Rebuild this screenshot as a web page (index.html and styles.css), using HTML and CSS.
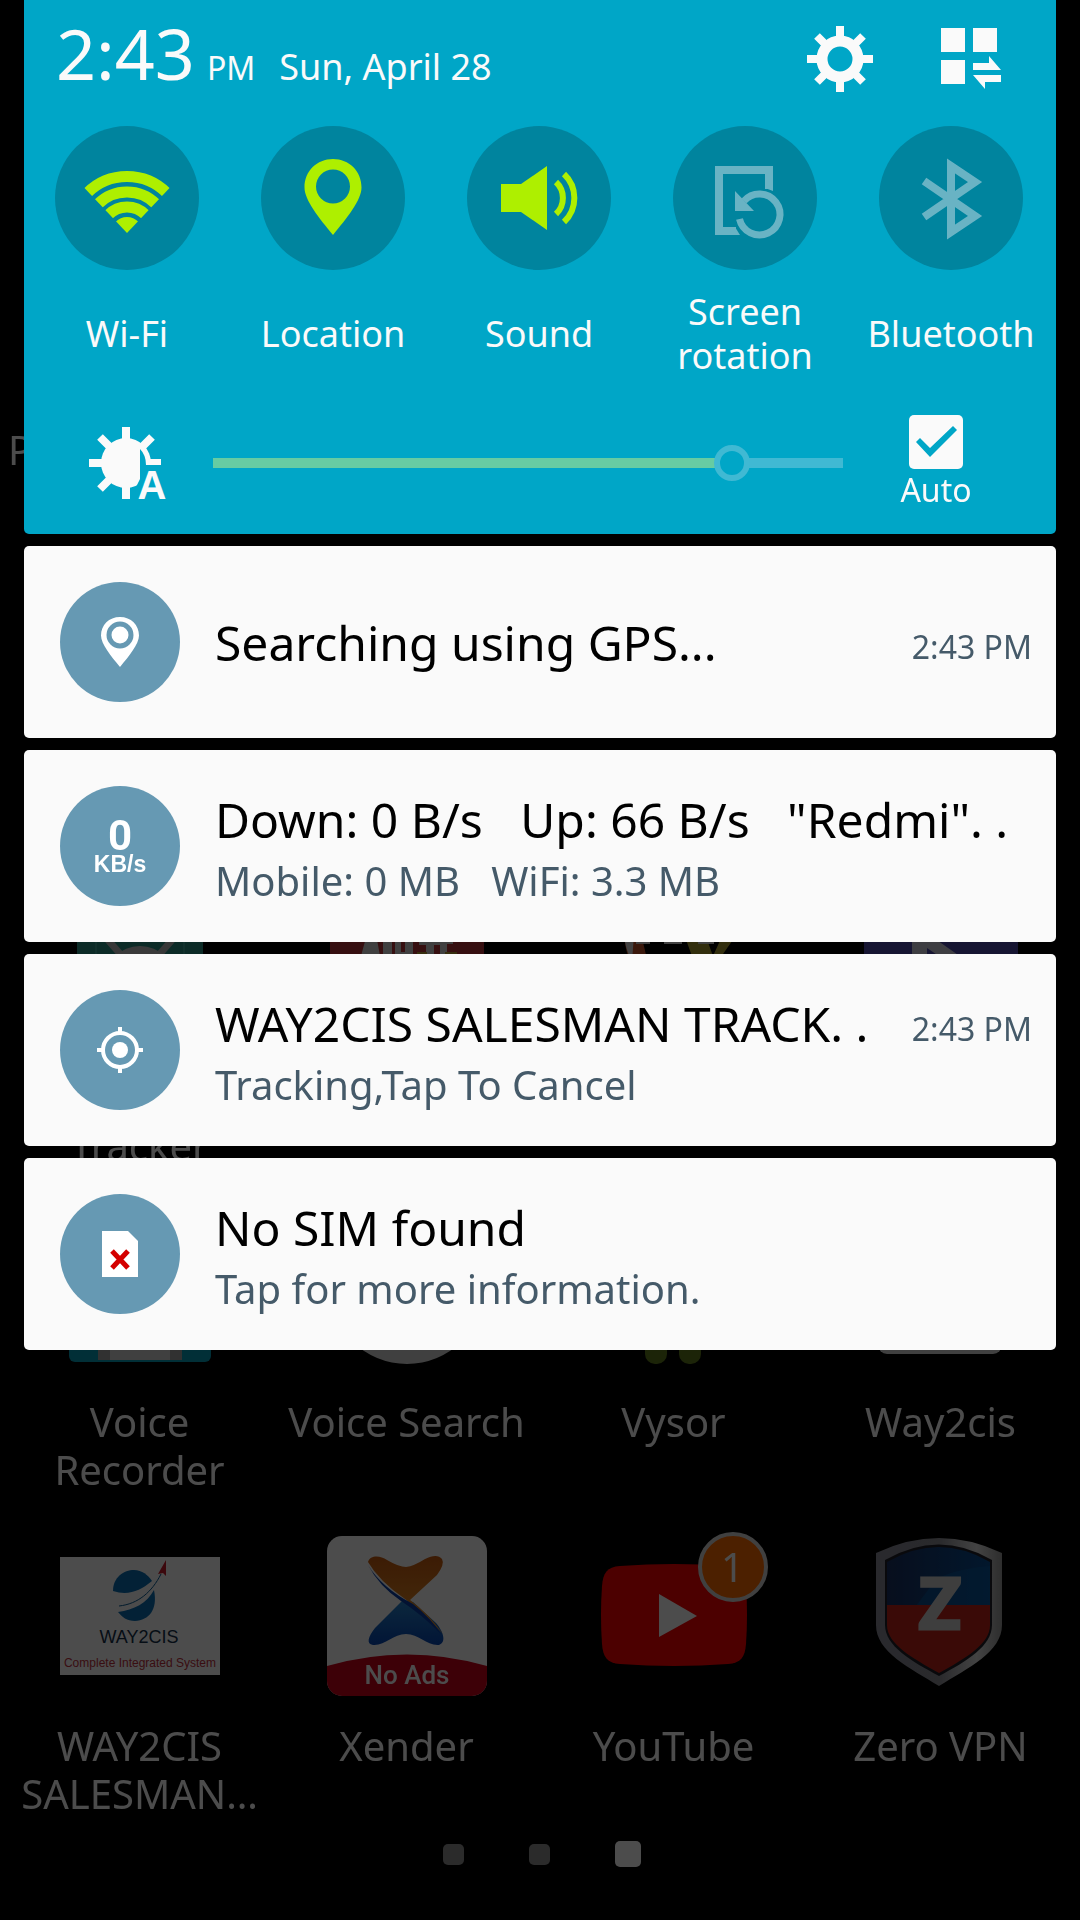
FILE: index.html
```html
<!DOCTYPE html>
<html lang="en">
<head>
<meta charset="utf-8">
<meta name="viewport" content="width=device-width, initial-scale=1">
<title>Notifications</title>
<link rel="stylesheet" href="styles.css">
</head>
<body>
<div class="screen">
  <main class="home">
    <div class="apps">
      <a class="app app-first" href="#"><span class="app-icon"></span><span class="app-label">P</span></a>

      <a class="app row-3" href="#">
        <svg class="app-icon" viewBox="0 0 160 160"><rect x="17" y="10" width="126" height="140" fill="#2b8f83"/><path d="M36 10v140M124 10v140" stroke="#3fa598" stroke-width="2"/><path d="M48 52l14 16M112 52l-14 16" stroke="#bbb" stroke-width="7"/><circle cx="80" cy="94" r="36" fill="#c4c4c4"/></svg>
        <span class="app-label"><br>Tracker</span>
      </a>
      <a class="app row-3" href="#">
        <svg class="app-icon" viewBox="0 0 160 160"><rect x="3" y="4" width="154" height="152" fill="#b53236"/><path d="M34 68l6-22h9l4 22zM56 46h9v20h-9zM68 46h6v18h4V46h8v20H68zM92 46h34v10h-6v10h-7v-9h-6v9h-8v-9h-7z" fill="#d8d8d8"/><path d="M90 64h10v4H90zM118 64h12v4h-12z" fill="#b59a30"/></svg>
      </a>
      <a class="app row-3" href="#">
        <svg class="app-icon" viewBox="0 0 160 160"><path d="M30 46c2 26 10 40 30 54L47 46z" fill="#c4532a"/><path d="M30 46c1 12 4 20 8 28l2-28z" fill="#ddd"/><path d="M90 46l18 50 35-50h-14l-10 22-8-22z" fill="#a89a2c"/><path d="M42 54h14M70 54h18M104 54h16" stroke="#ddd" stroke-width="4"/></svg>
      </a>
      <a class="app row-3" href="#">
        <svg class="app-icon" viewBox="0 0 160 160"><rect x="3" y="4" width="154" height="152" rx="40" fill="#4a46a8"/><path d="M51 48l9-7 80 56H51z" fill="#cfcfdc"/><path d="M66 60l44 30H66z" fill="#4a46a8"/></svg>
      </a>

      <a class="app row-4" href="#">
        <svg class="app-icon" viewBox="0 0 160 160"><rect x="9" y="8" width="142" height="142" rx="6" fill="#049dba"/><path d="M38 8h84v140H38z" fill="#a6a6a6"/><path d="M50 8h60v140H50z" fill="#d6d6d6"/></svg>
        <span class="app-label">Voice Recorder</span>
      </a>
      <a class="app row-4" href="#">
        <svg class="app-icon" viewBox="0 0 160 160"><circle cx="80" cy="74" r="78" fill="#d6d6d6"/></svg>
        <span class="app-label">Voice Search</span>
      </a>
      <a class="app row-4" href="#">
        <svg class="app-icon" viewBox="0 0 160 160"><rect x="51" y="100" width="22" height="52" rx="10" fill="#5f7a1c"/><rect x="85" y="100" width="22" height="52" rx="10" fill="#5f7a1c"/></svg>
        <span class="app-label">Vysor</span>
      </a>
      <a class="app row-4" href="#">
        <svg class="app-icon" viewBox="0 0 160 160"><rect x="17" y="20" width="124" height="122" rx="9" fill="#d6d6d6"/></svg>
        <span class="app-label">Way2cis</span>
      </a>

      <a class="app row-5" href="#">
        <svg class="app-icon" viewBox="0 0 160 160">
          <rect y="21" width="160" height="118" fill="#fff"/>
          <path d="M53 55C53 41 64 34 74 34c8 0 14 5 18 11C80 55 68 60 53 55z" fill="#0a6fb5"/>
          <path d="M58 76c16-2 29-9 36-22 4 20-5 30-19 31-8 0-13-4-17-9z" fill="#0a6fb5"/>
          <path d="M59 70C78 68 92 56 101 38" fill="none" stroke="#0a5c96" stroke-width="1"/>
          <path d="M106 24l-8 14 5-1 3 3z" fill="#c91c2c"/>
          <text class="logo-name" x="79" y="107">WAY2CIS</text>
          <text class="logo-tagline" x="80" y="131">Complete Integrated System</text>
        </svg>
        <span class="app-label">WAY2CIS SALESMAN…</span>
      </a>
      <a class="app row-5" href="#">
        <svg class="app-icon" viewBox="0 0 160 160">
          <defs><clipPath id="tile"><rect width="160" height="160" rx="15"/></clipPath>
          <linearGradient id="warm" x1="0" y1="0" x2="0" y2="1"><stop offset="0" stop-color="#c85c10"/><stop offset="1" stop-color="#ea9a2c"/></linearGradient>
          <linearGradient id="cool" x1="0" y1="0" x2="0" y2="1"><stop offset="0" stop-color="#2a86cc"/><stop offset="1" stop-color="#0646b4"/></linearGradient></defs>
          <g clip-path="url(#tile)"><rect width="160" height="160" fill="#fff"/><path d="M0 130Q80 107 160 130V160H0z" fill="#cc0019"/></g>
          <path d="M76 64L48 92C41 101 39 108 46 109C58 110 66 98 79 98C92 98 100 110 112 109C120 106 116 95 109 87L86 66z" fill="url(#cool)"/>
          <path d="M41 26C43 19 53 19 60 24Q72 31 79 31Q87 30 98 23Q110 17 115 23Q118 28 110 39L83 64Q102 78 116 98Q100 80 78 63Q52 45 41 26z" fill="url(#warm)"/>
          <path d="M41 29Q55 52 86 68Q104 82 114 98Q94 78 74 65Q52 50 41 29z" fill="#0b3fa8"/>
          <text class="logo-banner" x="80" y="148">No Ads</text>
        </svg>
        <span class="app-label">Xender</span>
      </a>
      <a class="app row-5" href="#">
        <span class="app-picture">
          <svg class="app-icon" viewBox="0 0 160 160"><path d="M26 30Q80 26 134 30C147 31 151 37 152 50Q154 79 152 108C151 121 147 127 134 128Q80 132 26 128C13 127 9 121 8 108Q6 79 8 50C9 37 13 31 26 30z" fill="#f00"/><path d="M65 58v43l38-21z" fill="#fff"/></svg>
          <span class="badge">1</span>
        </span>
        <span class="app-label">YouTube</span>
      </a>
      <a class="app row-5" href="#">
        <svg class="app-icon" viewBox="0 0 160 160">
          <defs><linearGradient id="steel"><stop offset="0" stop-color="#8a8a98"/><stop offset=".5" stop-color="#8c8c94"/><stop offset=".8" stop-color="#e0e0e0"/><stop offset="1" stop-color="#999"/></linearGradient>
          <linearGradient id="sky"><stop offset="0" stop-color="#1a2f60"/><stop offset="1" stop-color="#06519a"/></linearGradient>
          <clipPath id="field"><path d="M26 26Q78-4 129 26V89C129 108 105 122 78 137C51 122 26 108 26 89z"/></clipPath></defs>
          <path d="M15 17Q78-13 141 17V89C141 116 107 132 78 150C49 132 15 116 15 89z" fill="url(#steel)"/>
          <path d="M24 24Q78-7 131 24V89C131 110 106 125 78 140C50 125 24 110 24 89z" fill="#202028"/>
          <g clip-path="url(#field)"><rect x="20" y="8" width="120" height="62" fill="url(#sky)"/><path d="M76 42Q100 32 130 30V70H55z" fill="#0860a8" opacity=".5"/><rect x="20" y="69" width="120" height="80" fill="#c42418"/></g>
          <text class="logo-letter" x="79" y="93">Z</text>
        </svg>
        <span class="app-label">Zero VPN</span>
      </a>
    </div>
    <div class="pager"><span class="dot"></span><span class="dot"></span><span class="dot dot-current"></span></div>
  </main>

  <div class="shade">
    <section class="panel">
      <header class="status">
        <time class="clock">2:43</time>
        <span class="meridiem">PM</span>
        <span class="date">Sun, April 28</span>
        <button class="tool" type="button" aria-label="Settings">
          <svg viewBox="0 0 66 66"><circle cx="33" cy="33" r="18" fill="none" stroke="#fafafa" stroke-width="11"/><path d="M33 0v12M33 54v12M0 33h12M54 33h12M10 10l9 9M47 47l9 9M56 10l-9 9M19 47l-9 9" stroke="#fafafa" stroke-width="8"/></svg>
        </button>
        <button class="tool" type="button" aria-label="Edit quick settings">
          <svg viewBox="0 0 66 66"><path d="M3 2h24v24H3zM35 2h24v24H35zM3 34h24v24H3zM35 37h16v-7l12 14H35zM35 49h28v7H47v7z" fill="#fafafa"/></svg>
        </button>
      </header>

      <div class="toggles">
        <button class="toggle" type="button" aria-pressed="true">
          <svg class="disc" viewBox="0 0 144 144"><defs><clipPath id="wedge"><path d="M72 107L12 43.500V0H132V43.500z"/></clipPath></defs><g clip-path="url(#wedge)" fill="none" stroke="#aeef00" stroke-width="11"><circle cx="72" cy="107" r="56.500"/><circle cx="72" cy="107" r="41"/><circle cx="72" cy="107" r="26"/><circle cx="72" cy="107" r="8" stroke-width="16"/></g></svg>
          <span class="toggle-label">Wi-Fi</span>
        </button>
        <button class="toggle" type="button" aria-pressed="true">
          <svg class="disc" viewBox="0 0 144 144"><path fill="#aeef00" fill-rule="evenodd" d="M72 33c16 0 28.500 12 28.500 28.500C100.500 74 86 92 72 109C58 92 43.500 74 43.500 61.500C43.500 45 56 33 72 33zM72 43.500a17 17 0 1 0 0 34a17 17 0 1 0 0-34z"/></svg>
          <span class="toggle-label">Location</span>
        </button>
        <button class="toggle" type="button" aria-pressed="true">
          <svg class="disc" viewBox="0 0 144 144"><path d="M34 58h20l26-18v64L54 86H34z" fill="#aeef00"/><path d="M89 56a22 22 0 0 1 0 32M97 48a33 33 0 0 1 0 48" fill="none" stroke="#aeef00" stroke-width="6"/></svg>
          <span class="toggle-label">Sound</span>
        </button>
        <button class="toggle" type="button" aria-pressed="false">
          <svg class="disc" viewBox="0 0 144 144"><g fill="none" stroke="#69b3c4"><path d="M96 63V44H46v61h17" stroke-width="8"/><path d="M66.500 93A20.500 20.500 0 1 0 71 75" stroke-width="7"/></g><path d="M62 65v20h19zM92 62h8v3zM62 101v8h5z" fill="#69b3c4"/></svg>
          <span class="toggle-label">Screen rotation</span>
        </button>
        <button class="toggle" type="button" aria-pressed="false">
          <svg class="disc" viewBox="0 0 144 144"><path d="M45 55L96 90L72 106V40L96 56L45 91" fill="none" stroke="#69b3c4" stroke-width="8" stroke-miterlimit="6"/></svg>
          <span class="toggle-label">Bluetooth</span>
        </button>
      </div>

      <div class="brightness">
        <svg class="sun" viewBox="0 0 80 80"><path d="M38 4v16M38 60v16M1 40h16M58 40h15M12 14l10 10M12 66l10-10M64 14L54 24" stroke="#fafafa" stroke-width="8"/><circle cx="38" cy="40" r="25" fill="#fafafa"/><path d="M52 26Q58 32 58 42H80V80H48L47 66L52 56z" fill="#00a6c7"/><text class="sun-letter" x="64" y="76">A</text></svg>
        <input class="slider" type="range" min="0" max="1000" value="843" aria-label="Brightness">
        <label class="auto"><input class="tick" type="checkbox" checked><span>Auto</span></label>
      </div>
    </section>

    <article class="card">
      <svg class="card-icon" viewBox="0 0 120 120"><path fill="#fff" d="M60 35c11 0 19 8 19 18.500C79 62 69 74 60 85C51 74 41 62 41 53.500C41 43 49 35 60 35z"/><circle cx="60" cy="53" r="11" fill="#fff" stroke="#6699b3" stroke-width="5"/></svg>
      <div class="card-body"><h2 class="card-title">Searching using GPS...</h2></div>
      <time class="card-time">2:43 PM</time>
    </article>
    <article class="card">
      <svg class="card-icon" viewBox="0 0 120 120"><text class="rate" x="60" y="64">0</text><text class="rate-unit" x="60" y="86">KB/s</text></svg>
      <div class="card-body card-body-pair"><h2 class="card-title">Down: 0 B/s   Up: 66 B/s   "Redmi". .</h2><p class="card-text">Mobile: 0 MB   WiFi: 3.3 MB</p></div>
    </article>
    <article class="card">
      <svg class="card-icon" viewBox="0 0 120 120"><circle cx="60" cy="60" r="8" fill="#fff"/><circle cx="60" cy="60" r="17" fill="none" stroke="#fff" stroke-width="4"/><path d="M60 37v6M60 77v6M37 60h6M77 60h6" stroke="#fff" stroke-width="4"/></svg>
      <div class="card-body card-body-pair"><h2 class="card-title">WAY2CIS SALESMAN TRACK. .</h2><p class="card-text">Tracking,Tap To Cancel</p></div>
      <time class="card-time card-time-top">2:43 PM</time>
    </article>
    <article class="card">
      <svg class="card-icon" viewBox="0 0 120 120"><path d="M42 37h26l10 10v36H42z" fill="#fff"/><path d="M52 57l16 17M68 57L52 74" stroke="#d40000" stroke-width="5"/></svg>
      <div class="card-body card-body-pair"><h2 class="card-title">No SIM found</h2><p class="card-text">Tap for more information.</p></div>
    </article>
  </div>
</div>
</body>
</html>
```
FILE: styles.css
```css
* {
  box-sizing: border-box;
}

body {
  margin: 0;
  background: #000;
  font-family: "Noto Sans", "Open Sans", sans-serif;
}

button {
  margin: 0;
  padding: 0;
  border: 0;
  background: none;
  color: inherit;
  font: inherit;
}

svg {
  display: block;
}

/* The home screen and the notification shade share one grid cell. */
.screen {
  display: grid;
  grid-template-columns: minmax(0, 1fr);
  min-height: 100vh;
}

.home,
.shade {
  grid-area: 1 / 1;
}

.home {
  padding: 240px 6px 40px;
  opacity: 0.3;
}

.apps {
  display: grid;
  grid-template-columns: repeat(4, minmax(0, 1fr));
  grid-template-rows: repeat(5, minmax(282px, auto));
  row-gap: 42px;
}

.app {
  display: flex;
  flex-direction: column;
  align-items: center;
  gap: 26px;
  color: #fff;
  text-decoration: none;
}

.app-first {
  grid-area: 1 / 1;
  align-items: flex-start;
}

.row-3 {
  grid-row: 3;
}

.row-4 {
  grid-row: 4;
}

.row-5 {
  grid-row: 5;
}

.app-icon {
  width: 160px;
  height: 160px;
}

.app-picture {
  position: relative;
}

.app-label {
  padding: 0 2px;
  font-size: 40px;
  line-height: 48px;
  text-align: center;
}

.badge {
  position: absolute;
  top: -4px;
  right: -14px;
  width: 70px;
  height: 70px;
  border: 4px solid #d8d8d8;
  border-radius: 50%;
  background: #ff6b00;
  font-size: 40px;
  line-height: 62px;
  text-align: center;
}

.logo-name,
.logo-tagline {
  font-family: "Liberation Sans Narrow", "Liberation Sans", sans-serif;
  text-anchor: middle;
}

.logo-name {
  fill: #14304a;
  font-size: 18px;
}

.logo-tagline {
  fill: #c0303c;
  font-size: 12px;
}

.logo-banner {
  fill: #fff;
  font-family: Roboto, sans-serif;
  font-size: 26px;
  font-weight: 500;
  text-anchor: middle;
}

.logo-letter {
  fill: #d0d0d0;
  stroke: #d0d0d0;
  stroke-width: 3px;
  font-family: Lato, sans-serif;
  font-size: 70px;
  font-weight: 900;
  text-anchor: middle;
}

.pager {
  display: flex;
  justify-content: center;
  align-items: center;
  gap: 65px;
  margin-top: 23px;
  padding-left: 4px;
}

.dot {
  width: 21px;
  height: 21px;
  border-radius: 5px;
  background: #909090;
}

.dot-current {
  width: 26px;
  height: 26px;
  background: #fff;
}

.shade {
  position: relative;
  z-index: 1;
  display: flex;
  flex-direction: column;
  align-self: start;
  gap: 12px;
  margin: 0 24px;
}

.panel {
  border-radius: 0 0 5px 5px;
  background: #00a6c7;
  color: #fafafa;
}

.status {
  display: flex;
  align-items: flex-start;
  padding: 26px 52px 0 32px;
}

.clock,
.meridiem,
.date {
  align-self: baseline;
  line-height: 54px;
}

.clock {
  font-size: 70px;
}

.meridiem {
  margin-left: 12px;
  font-size: 32px;
}

.date {
  margin-left: 24px;
  font-size: 36px;
}

.tool {
  width: 66px;
  height: 66px;
  margin-left: auto;
}

.tool + .tool {
  margin-left: 65px;
}

.toggles {
  display: grid;
  grid-template-columns: repeat(5, minmax(0, 1fr));
  padding: 31px 2px 0 0;
}

.toggle {
  display: flex;
  flex-direction: column;
  align-items: center;
  gap: 20px;
}

.disc {
  width: 144px;
  height: 144px;
  border-radius: 50%;
  background: #00849e;
}

.toggle-label {
  display: flex;
  align-items: center;
  min-height: 88px;
  padding: 0 10px;
  font-size: 36px;
  line-height: 44px;
}

.brightness {
  display: flex;
  align-items: center;
  padding: 37px 82px 23px 64px;
}

.sun {
  width: 80px;
  height: 80px;
}

.sun-letter {
  fill: #fafafa;
  font-family: "Liberation Sans", sans-serif;
  font-size: 40px;
  font-weight: 700;
  text-anchor: middle;
}

.slider {
  flex: 1;
  min-width: 0;
  height: 36px;
  margin: 0 55px 0 45px;
  appearance: none;
  background: none;
}

.slider::-webkit-slider-runnable-track {
  height: 10px;
  background: linear-gradient(to right, #66cca3 82%, #40b9d3 82%);
}

.slider::-webkit-slider-thumb {
  width: 36px;
  height: 36px;
  margin-top: -13px;
  border: 6px solid #40b9d3;
  border-radius: 50%;
  appearance: none;
  background: #00a6c7;
}

.auto {
  display: flex;
  flex-direction: column;
  align-items: center;
  width: 76px;
  font-size: 32px;
  line-height: 42px;
}

.tick {
  width: 54px;
  height: 54px;
  margin: 0;
  border-radius: 5px;
  appearance: none;
  background: #fafafa;
}

.tick:checked::before {
  display: block;
  width: 54px;
  height: 54px;
  background: #00a6c7;
  clip-path: polygon(7px 27px, 11px 23px, 21px 33px, 44px 11px, 48px 15px, 21px 42px);
  content: "";
}

.card {
  display: flex;
  align-items: center;
  min-height: 192px;
  padding: 0 24px 0 36px;
  border-radius: 5px;
  background: #fafafa;
}

.card-icon {
  flex: none;
  width: 120px;
  height: 120px;
  margin-right: 35px;
  border-radius: 50%;
  background: #6699b3;
}

.card-body {
  flex: 1;
  min-width: 0;
  padding-top: 2px;
}

.card-body-pair {
  padding-top: 6px;
}

.card-title,
.card-text {
  margin: 0;
  font-weight: 400;
  white-space: pre;
}

.card-title {
  color: #000;
  font-size: 48px;
  line-height: 56px;
}

.card-text {
  margin-top: 8px;
  color: #455a69;
  font-size: 40px;
  line-height: 50px;
}

.card-time {
  padding-top: 10px;
  color: #455a69;
  font-size: 32px;
  line-height: 44px;
}

.card-time-top {
  align-self: flex-start;
  padding-top: 53px;
}

.rate,
.rate-unit {
  fill: #fff;
  font-weight: 700;
  text-anchor: middle;
}

.rate {
  font-family: Roboto, sans-serif;
  font-size: 42px;
}

.rate-unit {
  font-family: "Liberation Sans", sans-serif;
  font-size: 23px;
}
```
